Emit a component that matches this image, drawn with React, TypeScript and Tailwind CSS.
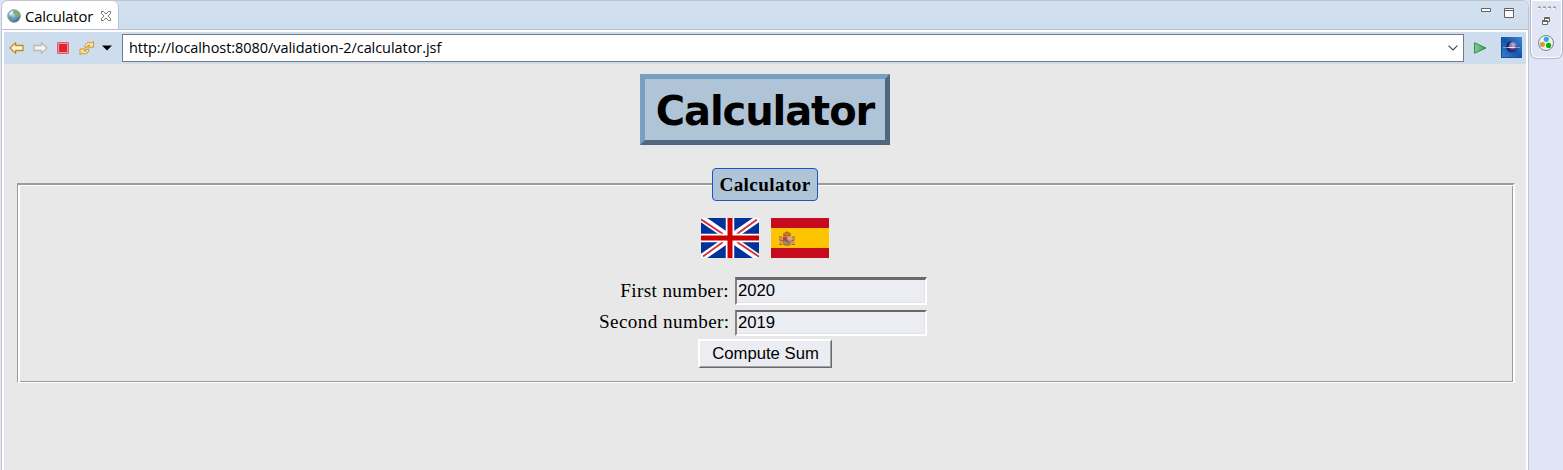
import React from "react";

const Globe = () => (
  <svg width="14" height="14" viewBox="0 0 14 14" className="shrink-0">
    <defs>
      <radialGradient id="globe" cx=".35" cy=".3" r=".75">
        <stop offset="0" stopColor="#c9e5f5" />
        <stop offset=".55" stopColor="#6aa0cc" />
        <stop offset="1" stopColor="#356692" />
      </radialGradient>
    </defs>
    <circle cx="7" cy="7" r="6.3" fill="url(#globe)" stroke="#7890a0" strokeWidth=".8" />
    <path d="M7 1.6 11 2.8 12.7 6 11 8.5 8.8 7.5 7.8 5 6 4.5z" fill="#8fab62" />
    <path d="M2 7 5 8 6.5 10 5 12.5 2.5 10.5z" fill="#68a07a" />
    <path d="M2.5 4.5Q4 2 6 2.2L5 4.8 3 6z" fill="#e5f4fa" />
  </svg>
);

const Arrow = ({ fill, stroke, flip }: { fill: string; stroke: string; flip?: boolean }) => (
  <svg width="15" height="14" viewBox="0 0 15 14" className={flip ? "shrink-0 -scale-x-100" : "shrink-0"}>
    <path d="M1 7 6.6 1.6V4.5H14V9.5H6.6V12.4Z" fill={fill} stroke={stroke} strokeWidth="1.3" strokeLinejoin="round" />
  </svg>
);

const Refresh = () => (
  <svg width="16" height="16" viewBox="0 0 16 16" className="shrink-0">
    <g fill="#fbe39a" stroke="#c68f30" strokeWidth=".9" strokeLinejoin="round">
      <path d="M6 7.4Q5.6 3.4 9.4 2.4Q11.6 1.8 12.7 3L14.6 1.4V7.2H9.3L10.9 5.2Q8.4 4.2 8.2 7.2Z" />
      <path d="M1 9H6.6L4.9 10.9Q7.4 12 7.8 9H10Q10 13.2 6.4 13.8Q4.4 14.2 3 13L1 14.8Z" />
    </g>
  </svg>
);

const UkFlag = () => (
  <svg width="58" height="40" viewBox="0 0 58 40">
    <rect width="58" height="40" fill="#003399" />
    <path d="M0 0 58 40M58 0 0 40" stroke="#fff" strokeWidth="7" />
    <path d="M0 1.3 22 16M36 16 56 1.5M58 38.7 36 24M22 24 2 38.5" stroke="#d62b38" strokeWidth="1.8" />
    <path d="M29 0V40M0 20H58" stroke="#fff" strokeWidth="8.5" />
    <path d="M29 0V40M0 20H58" stroke="#cc0000" strokeWidth="5" />
  </svg>
);

const SpainFlag = () => (
  <svg width="58" height="40" viewBox="0 0 58 40">
    <rect width="58" height="40" fill="#c60b1e" />
    <rect y="10" width="58" height="20" fill="#ffc400" />
    <path d="M8.5 19H11V26H8.5zM21 19H23.5V26H21z" fill="#c69b65" />
    <path d="M8 26.5H11.5M20.5 26.5H24M8 19H11M21 19H24" stroke="#ad652d" />
    <path d="M11.7 18.5H20.3V25Q20 28 16 28 12 28 11.7 25Z" fill="#aa7469" />
    <path d="M12 18.8H15.8V22.7H12z" fill="#bf3e2d" />
    <path d="M16.2 18.8H20V22.7H16.2z" fill="#c9a4a5" />
    <path d="M12.2 23.2H15.7V27Q13 26.5 12.2 23.2z" fill="#b78b22" />
    <circle cx="16" cy="22.8" r="1.4" fill="#65678e" />
    <path d="M12.5 18 12 15.5 14 14.5 16 13.3 18 14.5 20 15.5 19.5 18z" fill="#b85b2c" />
    <path d="M13.5 16H18.5" stroke="#d6a236" />
    <path d="M8 21.5 12 23.2M20 23.2 24 21.5" stroke="#b74927" strokeWidth=".9" />
  </svg>
);

const Eclipse = () => (
  <svg width="21" height="21" viewBox="0 0 21 21" className="shrink-0">
    <defs>
      <linearGradient id="sky" x1="1" y1="0" x2="0" y2="1">
        <stop offset="0" stopColor="#3d86d6" />
        <stop offset=".5" stopColor="#1555ac" />
        <stop offset="1" stopColor="#3784cf" />
      </linearGradient>
      <radialGradient id="planet" cx=".6" cy=".3">
        <stop offset="0" stopColor="#c3bbdf" />
        <stop offset=".7" stopColor="#6d5ba3" />
        <stop offset="1" stopColor="#352b70" />
      </radialGradient>
    </defs>
    <rect width="21" height="21" fill="url(#sky)" />
    <path d="M.5 0V20.5H21" fill="none" stroke="#174b92" />
    <circle cx="11" cy="10" r="5.4" fill="url(#planet)" />
    <path d="M6.5 6.2Q8 4 11 4.3Q7.2 6.5 7.2 10Q7.2 13.5 10.5 15.3Q5.4 14.5 5.4 10z" fill="#1d1b55" />
    <path d="M2 10.5H19" stroke="#8995cc" strokeWidth="1" />
    <path d="M7 10.5H14" stroke="#eee9f4" strokeWidth="1" />
  </svg>
);

const Field = ({ value, label, box, lift }: { value: string; label: string; box: string; lift?: boolean }) => (
  <>
    <label className={lift ? "w-[131px] pr-px pb-[2px] text-right whitespace-nowrap" : "w-[131px] pr-px text-right whitespace-nowrap"}>{label}</label>
    <div className={`w-[192px] border-t-[#696969] border-l-[#828282] border-r-white border-b-white border-solid bg-[#ebedf3] shadow-[inset_-1px_-1px_0_#e3e3e3] font-['Liberation_Sans',sans-serif] text-[16.7px] tracking-normal pl-px ${box}`}>
      {value}
    </div>
  </>
);

export default function App() {
  return (
    <div className="flex h-[470px] w-[1563px] overflow-hidden bg-[#dfe5f5] text-black">
      <div className="ml-px flex w-[1528px] shrink-0 flex-col rounded-t-[7px] border-x border-t border-[#c2c3cc] bg-white">
        <div className="flex h-[29px] shrink-0 overflow-hidden rounded-t-[6px] border-b border-[#b8bed3] bg-gradient-to-b from-[#d2e1f0] to-[#cfdeee]">
          <div className="-mb-px flex h-[29px] w-[117px] items-center rounded-tr-[6px] border-r border-[#b6c4db] bg-white pt-px pl-[5px]">
            <Globe />
            <span className="ml-[4px] w-[69px] font-['Open_Sans','Noto_Sans',sans-serif] text-[14.8px] leading-[20px] tracking-[-0.15px]">Calculator</span>
            <svg width="12" height="12" viewBox="0 0 12 12" className="ml-[6px] shrink-0" fill="white" stroke="#656565" strokeWidth=".9">
              <path d="M1.5 1.5H3.5L6 4 8.5 1.5H10.5V3.5L8 6 10.5 8.5V10.5H8.5L6 8 3.5 10.5H1.5V8.5L4 6 1.5 3.5Z" />
            </svg>
          </div>
          <div className="ml-auto flex pt-[7px] pr-[12px]">
            <svg width="35" height="12" viewBox="0 0 35 12" fill="white" stroke="#666160">
              <path d="M.5 .5H9.5V3.5H.5zM23.5 .5H32.5V9.5H23.5zM23.5 2.5H32.5" />
            </svg>
          </div>
        </div>
        <div className="mx-[2px] mt-[2px] flex h-[32px] shrink-0 items-center bg-[#cedded]">
          <div className="ml-[5px] flex items-center">
            <Arrow fill="#fff6d0" stroke="#c38a20" />
            <div className="ml-[9px] flex"><Arrow fill="#f4f4f4" stroke="#b7b7b7" flip /></div>
            <svg width="12" height="12" viewBox="0 0 12 12" className="ml-[9px] shrink-0">
              <rect x=".5" y=".5" width="11" height="11" rx=".5" fill="#f09a9f" stroke="#d6606a" />
              <rect x="2" y="2" width="8" height="8" fill="#dc2434" />
            </svg>
            <div className="ml-[10px]"><Refresh /></div>
            <svg width="10" height="6" viewBox="0 0 10 6" className="ml-[7px] shrink-0"><path d="M0 .5H10L5 5.5Z" fill="black" /></svg>
          </div>
          <div className="ml-[10px] flex h-[28px] w-[1342px] shrink-0 items-center border border-[#7a7a7a] bg-white pl-[6px]">
            <span className="font-['Open_Sans','Noto_Sans',sans-serif] text-[14.5px] leading-[20px] tracking-[-0.06px]">http://localhost:8080/validation-2/calculator.jsf</span>
            <svg width="10" height="6" viewBox="0 0 10 6" className="mr-[5px] ml-auto shrink-0"><path d="M.6 .6 5 5 9.4 .6" fill="none" stroke="#444" strokeWidth="1.1" /></svg>
          </div>
          <svg width="13" height="12" viewBox="0 0 13 12" className="ml-[10px] shrink-0">
            <defs><linearGradient id="go"><stop stopColor="#8bcc91" /><stop offset="1" stopColor="#38a653" /></linearGradient></defs>
            <path d="M.6 .8 12 6 .6 11.2Z" fill="url(#go)" stroke="#269046" strokeLinejoin="round" />
          </svg>
          <div className="ml-[14px] flex pb-px"><Eclipse /></div>
        </div>
        <main className="mx-[2px] flex flex-1 flex-col items-center bg-[#e8e8e8] pt-[10px] font-['Liberation_Serif',serif] text-[19.2px] leading-[22px] tracking-[0.38px]">
          <h1 className="flex h-[71px] w-[250px] items-center justify-center border-[5px] border-t-[#789fc1] border-r-[#50687f] border-b-[#50687f] border-l-[#789fc1] bg-[#b0c4d8] pt-[2px] font-['DejaVu_Sans',sans-serif] text-[40px] leading-[48px] font-bold tracking-[-1.1px] whitespace-nowrap">Calculator</h1>
          <fieldset className="mt-[22.6px] ml-[2px] flex h-[215.4px] w-[1498px] flex-col items-center border-t-2 border-r-2 border-b border-l border-t-[#9b9b9b] border-r-white border-b-white border-l-[#9b9b9b] pr-px shadow-[inset_2px_1px_0_white,inset_-1px_-1px_0_#9b9b9b]">
            <legend className="mx-auto flex h-[33px] w-[106px] items-center justify-center rounded-[4px] border border-[#1c55bd] bg-[#b0c4d8] pt-px font-bold">Calculator</legend>
            <div className="mt-[17.4px] flex justify-center gap-[12px]">
              <UkFlag />
              <SpainFlag />
            </div>
            <div className="mt-[19px] flex w-[332px] items-center justify-between pr-[4px]">
              <Field label="First number:" value="2020" box="h-[28px] border-t-[3px] border-l-2 border-r-2 border-b-2 leading-[21px]" />
            </div>
            <div className="mt-[5px] flex w-[332px] items-center justify-between pr-[4px]">
              <Field label="Second number:" value="2019" box="h-[26px] border-2 leading-[21px]" lift />
            </div>
            <button className="mt-[3px] h-[29px] w-[134px] border-t-2 border-r border-b border-l-2 border-t-white border-r-[#696969] border-b-[#696969] border-l-white bg-[#ebedf3] font-['Liberation_Sans',sans-serif] text-[16.7px] leading-[22px] tracking-normal shadow-[inset_-1px_-1px_0_#a0a0a0]">Compute Sum</button>
          </fieldset>
        </main>
      </div>
      <aside className="ml-[1px] flex h-[59px] w-[33px] shrink-0 flex-col items-center rounded-b-[7px] border border-t-0 border-[#b4b8c9] bg-[#e0e6f6] shadow-[inset_0_0_0_1px_white]">
        <svg width="31" height="56" viewBox="0 0 31 56">
          <path d="M7 7.5H25" stroke="#a59b91" strokeWidth="2" strokeDasharray="3 2" />
          <path d="M7 8.5H25" stroke="white" strokeDasharray="2 3" />
          <path d="M13.5 17.5H18.5V21.5H13.5zM13.5 18.5H18.5M11.5 20.5H16.5V24.5H11.5zM11.5 21.5H16.5" fill="white" stroke="#6b625d" />
          <circle cx="15" cy="43" r="7.5" fill="#eef3ee" stroke="#738b7b" />
          <circle cx="15.3" cy="39.3" r="2.6" fill="#31a8e8" />
          <circle cx="11.4" cy="44.6" r="2.5" fill="#d29a34" />
          <circle cx="17.6" cy="45.4" r="2.6" fill="#08b300" />
        </svg>
      </aside>
    </div>
  );
}
